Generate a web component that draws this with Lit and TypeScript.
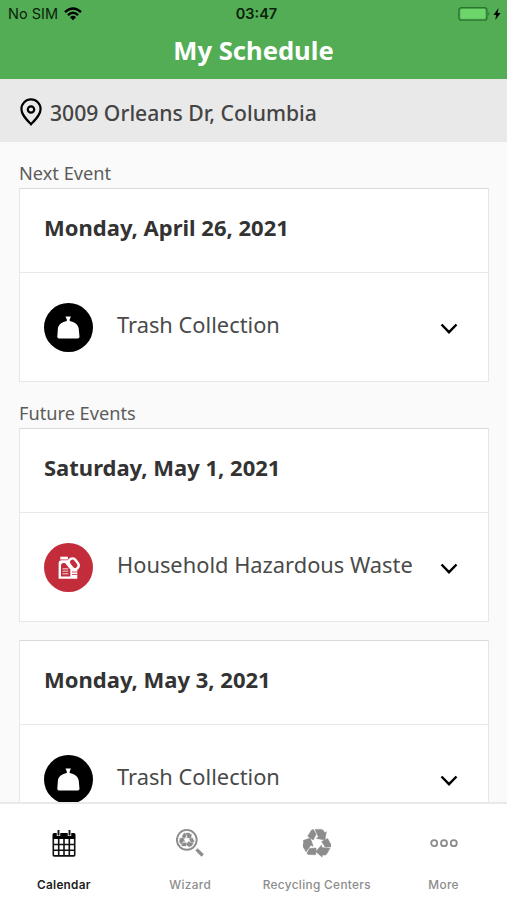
import { LitElement, html, css, svg } from "lit";
import { customElement, property } from "lit/decorators.js";

const recycle = svg`
  <g fill="currentColor" stroke="currentColor" stroke-width=".5" stroke-linejoin="round">
    ${[0, 120, 240].map(
      (a) => svg`<g transform="rotate(${a} 14 15.2)">
        <path d="M4.700 8.300 8.200 2.500Q9 1.400 10.400 1.500L13.200 6.200 10.200 12z"/>
        <path d="M12 1.400h6.200q1.500 0 2.300 1.300l1.200 2 1.700-.9-1.500 8.200-8.600-1.600 2.100-1.500z"/>
      </g>`
    )}
  </g>`;

const trash = svg`<svg viewBox="0 0 49 49" width="49" height="49">
  <circle cx="24.5" cy="24.5" r="24.5" fill="#000"/>
  <path fill="#fff" d="M21.500 13.600h5.400l-1.200 3v1.300c4.800.8 8.300 3.400 9 7.600l.8 8.300q0 1.700-1.700 1.800H15q-1.800-.1-1.700-1.800l.6-8.300c.7-4.200 4.100-6.800 8.900-7.600v-1.300z"/>
</svg>`;

const hazard = svg`<svg viewBox="0 0 49 49" width="49" height="49">
  <circle cx="24.500" cy="24.500" r="24.500" fill="#c32c3b"/>
  <path fill="#fff" d="M16.300 13.700h7.600v2.800h-7.600z"/>
  <path fill="#fff" d="M14.600 35.700V20.200q0-3 3-3H27L33.300 27v8.700z"/>
  <path fill="#c32c3b" d="M17 33.400V22.500q0-2.600 2.500-2.600h1.500l5.300 6.600v6.900z"/>
  <rect x="26" y="15" width="7.400" height="11.600" rx="3.600" transform="rotate(-38 29.700 20.800)" fill="#c32c3b" stroke="#fff" stroke-width="2.500"/>
  <path d="M18.500 25.700h5.800M18.500 28.200h5.800M18.500 30.700h5.800" stroke="#fff" stroke-width="1.400" opacity=".55"/>
  <path d="M28 29h5.500M28 31.500h5.500" stroke="#c32c3b" stroke-width=".8"/>
</svg>`;

@customElement("schedule-card")
class ScheduleCard extends LitElement {
  @property() date = "";
  @property() event = "";
  @property() kind = "trash";
  static styles = css`
    :host { display: block; box-sizing: border-box; width: 470px; height: 194px; background: #fff; border: 1px solid #e6e6e6; border-top-color: #d9d9d9; }
    .date { box-sizing: border-box; height: 84px; padding: 21px 24px 0; font-size: 22px; line-height: 34px; font-weight: 700; color: #333; border-bottom: 1px solid #e8e8e8; white-space: nowrap; }
    .row { display: flex; align-items: center; height: 108px; padding: 0 29px 0 24px; }
    .name { flex: 1; margin: -5px 0 0 24px; font-size: 21.850px; color: #4a4a4a; white-space: nowrap; }
    .chevron { margin-top: 2px; }
    svg { display: block; flex: none; }
  `;
  render() {
    return html`<div class="date">${this.date}</div>
      <div class="row">
        ${this.kind === "trash" ? trash : hazard}
        <div class="name">${this.event}</div>
        <svg class="chevron" width="20" height="14" viewBox="0 0 20 14"><path d="M2.500 3.500 10 11.200 17.500 3.500" fill="none" stroke="#000" stroke-width="2.400"/></svg>
      </div>`;
  }
}

@customElement("app-root")
class AppRoot extends LitElement {
  static styles = css`
    :host { display: flex; flex-direction: column; width: 507px; height: 900px; overflow: hidden; background: #fafafa; font-family: "Noto Sans", sans-serif; }
    svg { display: block; flex: none; }
    header { flex: none; height: 79px; background: #52ad54; }
    .status { display: grid; grid-template-columns: 1fr auto 1fr; align-items: center; height: 28px; padding: 0 6px 0 8px; font: 14.500px/28px Inter, sans-serif; color: #0b210c; }
    .left, .right { display: flex; align-items: center; }
    .left { gap: 6px; }
    .right { justify-content: flex-end; gap: 3px; }
    .time { font-weight: 600; font-size: 14.500px; padding-left: 4px; }
    h1 { margin: 0; font-size: 25.600px; line-height: 45px; font-weight: 700; color: #fff; text-align: center; white-space: nowrap; }
    .address { flex: none; box-sizing: border-box; display: flex; align-items: center; gap: 8px; height: 63px; padding: 3px 20px 0; background: #e9e9e9; font-size: 21.150px; font-weight: 500; color: #444; white-space: nowrap; }
    .street { padding-top: 1px; }
    main { flex: 1; min-height: 0; overflow: hidden; padding: 18px 18px 0 19px; }
    .label { height: 28px; line-height: 26px; font-size: 18.200px; color: #5c5c5c; }
    .label.future { margin-top: 18px; }
    .last { margin-top: 18px; }
    nav { flex: none; box-sizing: border-box; display: grid; grid-template-columns: repeat(4, 1fr); height: 98px; background: #fff; border-top: 2px solid #e9e9e9; }
    .tab { display: flex; flex-direction: column; align-items: center; padding-top: 24px; color: #8c8c8c; font: 500 11.800px/16px Inter, sans-serif; letter-spacing: .35px; white-space: nowrap; }
    .tab svg { margin-bottom: 19px; }
    .on { color: #1c1c1c; font-weight: 600; letter-spacing: .25px; padding-left: 1px; }
  `;
  render() {
    return html`
      <header>
        <div class="status">
          <div class="left"><span class="sim">No SIM</span>
            <svg width="18" height="14" viewBox="0 0 18 14"><g fill="none" stroke="#000" stroke-width="2.400"><path d="M1 5.200Q9-2 17 5.200M3.900 8.200Q9 3.500 14.100 8.200"/></g><path d="M6 10.200Q9 7.500 12 10.200L9 13.200z"/></svg>
          </div>
          <span class="time">03:47</span>
          <div class="right">
            <svg width="32" height="16" viewBox="0 0 32 16"><rect x=".9" y="1.600" width="28" height="12.600" rx="2.500" fill="#52ad54" stroke="#2b7330" stroke-width="1.300"/><rect x="2.400" y="3" width="25" height="9.800" rx="1.500" fill="#6cd66b"/><path d="M30.300 5.800q2 2 0 4z" fill="#2b7330"/></svg>
            <svg width="8" height="14" viewBox="0 0 8 14"><path d="M5.500 1 .5 8h2.700L2.300 13 7.600 6H4.600z"/></svg>
          </div>
        </div>
        <h1><span>My Schedule</span></h1>
      </header>
      <div class="address">
        <svg width="22" height="28" viewBox="0 0 22 28"><g fill="none" stroke="#000" stroke-width="2.200"><path d="M11 26.300C6 21 1.400 16.500 1.400 11a9.600 9.600 0 0 1 19.200 0C20.600 16.500 16 21 11 26.300z"/><circle cx="11" cy="11.500" r="3.200"/></g></svg>
        <span class="street">3009 Orleans Dr, Columbia</span>
      </div>
      <main>
        <div class="label">Next Event</div>
        <schedule-card date="Monday, April 26, 2021" event="Trash Collection"></schedule-card>
        <div class="label future">Future Events</div>
        <schedule-card date="Saturday, May 1, 2021" event="Household Hazardous Waste" kind="hazard"></schedule-card>
        <schedule-card class="last" date="Monday, May 3, 2021" event="Trash Collection"></schedule-card>
      </main>
      <nav>
        <div class="tab on"><svg width="28" height="30" viewBox="0 0 28 30"><path d="M4 5h20q1.500 0 1.500 1.500V11h-23V6.500Q2.500 5 4 5z"/><path d="M3.300 11v16q0 .9.900.9h19.600q.9 0 .9-.9V11M8.700 11v17M14 11v17M19.300 11v17M3 16.500h22M3 22.200h22" fill="none" stroke="#111" stroke-width="1.600"/><path d="M8.500 3v5M19.500 3v5" stroke="#fff" stroke-width="3.500"/><path d="M8.500 2v5.500M19.500 2v5.500" stroke="#111" stroke-width="1.900"/></svg>Calendar</div>
        <div class="tab"><svg width="28" height="30" viewBox="0 0 28 30"><circle cx="10.800" cy="11.800" r="9.900" fill="none" stroke="currentColor" stroke-width="1.900"/><g transform="translate(3.500 4.200) scale(.52)">${recycle}</g><path d="m20.500 21.300 6.200 6.200" stroke="currentColor" stroke-width="3.200"/></svg>Wizard</div>
        <div class="tab"><svg width="28" height="30" viewBox="0 0 28 30">${recycle}</svg>Recycling Centers</div>
        <div class="tab"><svg width="28" height="30" viewBox="0 0 28 30"><g fill="none" stroke="currentColor" stroke-width="1.800"><circle cx="4.200" cy="15.200" r="3"/><circle cx="14" cy="15.200" r="3"/><circle cx="23.800" cy="15.200" r="3"/></g></svg>More</div>
      </nav>`;
  }
}
